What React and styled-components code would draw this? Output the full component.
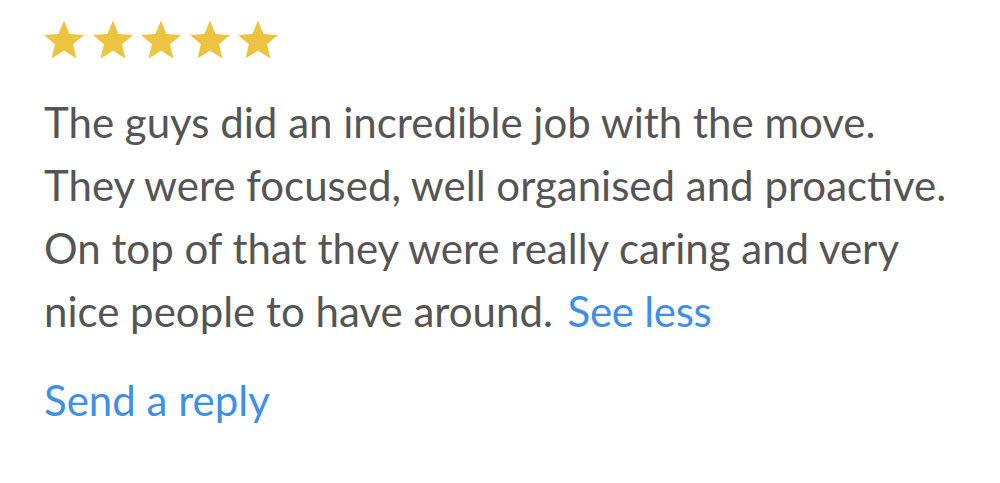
import React from 'react';
import styled, { createGlobalStyle } from 'styled-components';

const GlobalStyle = createGlobalStyle`
	body {
		margin: 0;
		background: #ffffff;
		font-family: Lato, "Open Sans", sans-serif;
	}
`;

const Card = styled.div`
	width: 1000px;
	height: 483px;
	box-sizing: border-box;
	padding: 20px 44px 0;
	display: flex;
	flex-direction: column;
`;

const Stars = styled.div`
	display: flex;
	gap: 8.5px;
	height: 40px;
`;

const Body = styled.p`
	margin: 31px 0 0;
	font-size: 42px;
	line-height: 63px;
	color: #555555;
`;

const Link = styled.a`
	color: #3f8ee8;
	text-decoration: none;
	cursor: pointer;
`;

const MoreLink = styled(Link)`
	margin-left: 4px;
	letter-spacing: -0.3px;
`;

const Reply = styled(Link)`
	margin-top: 32px;
	font-size: 42px;
	line-height: 50px;
	align-self: flex-start;
`;

const Star = () => (
	<svg width="40" height="39" viewBox="1.2 1.2 21.6 20.45">
		<path
			fill="#ecc440"
			d="M12 1.2l3.05 7.2 7.75.6-5.9 5.05 1.85 7.6L12 17.55 5.25 21.65l1.85-7.6L1.2 9l7.75-.6z"
		/>
	</svg>
);

const App = () => (
	<Card>
		<GlobalStyle />
		<Stars>
			{[0, 1, 2, 3, 4].map(i => (
				<Star key={String(i)} />
			))}
		</Stars>
		<Body>
			The guys did an incredible job with the move.
			<br />
			They were focused, well organised and proactive.
			<br />
			On top of that they were really caring and very
			<br />
			nice people to have around. <MoreLink>See less</MoreLink>
		</Body>
		<Reply>Send a reply</Reply>
	</Card>
);

export default App;
